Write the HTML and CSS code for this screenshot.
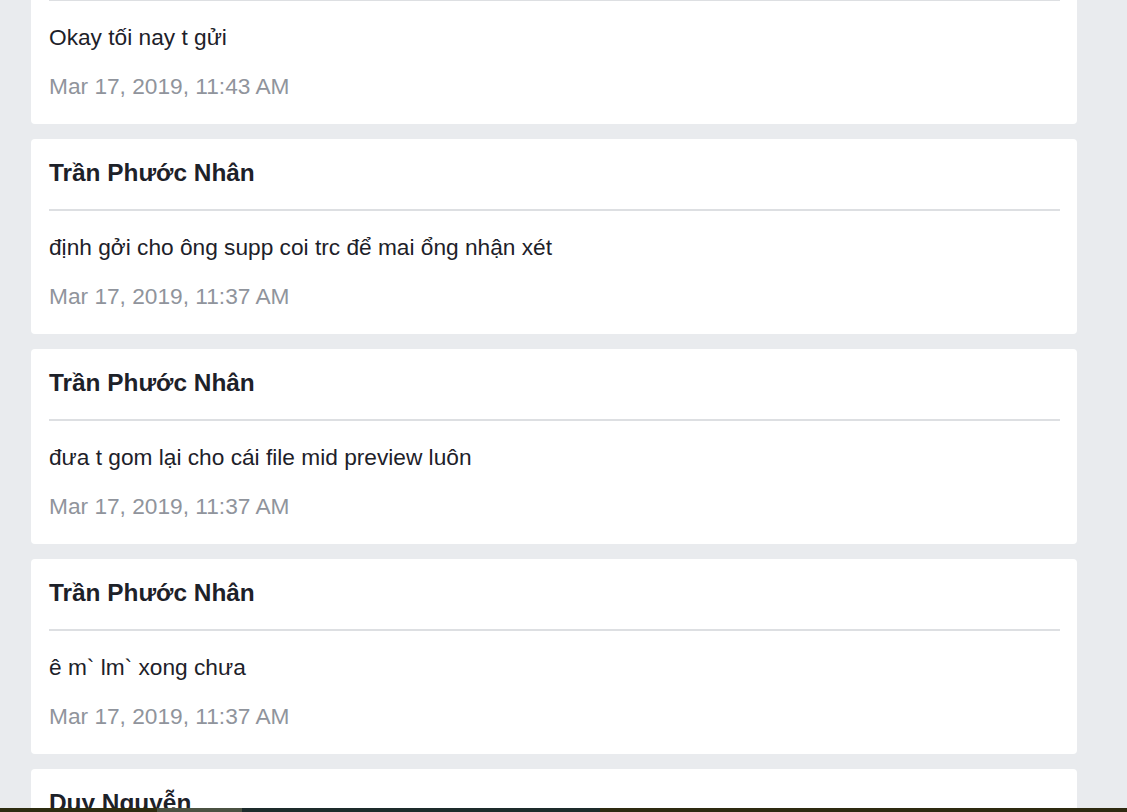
FILE: index.html
```html
<!DOCTYPE html>
<html lang="vi">
<head>
<meta charset="utf-8">
<title>Messages</title>
<link rel="stylesheet" href="styles.css">
</head>
<body>
<main class="feed">
  <article class="card">
    <header class="card-head"><h2 class="author">Trần Phước Nhân</h2></header>
    <div class="card-body">
      <p class="message">Okay tối nay t gửi</p>
      <p class="time">Mar 17, 2019, 11:43 AM</p>
    </div>
  </article>
  <article class="card">
    <header class="card-head"><h2 class="author">Trần Phước Nhân</h2></header>
    <div class="card-body">
      <p class="message">định gởi cho ông supp coi trc để mai ổng nhận xét</p>
      <p class="time">Mar 17, 2019, 11:37 AM</p>
    </div>
  </article>
  <article class="card">
    <header class="card-head"><h2 class="author">Trần Phước Nhân</h2></header>
    <div class="card-body">
      <p class="message">đưa t gom lại cho cái file mid preview luôn</p>
      <p class="time">Mar 17, 2019, 11:37 AM</p>
    </div>
  </article>
  <article class="card">
    <header class="card-head"><h2 class="author">Trần Phước Nhân</h2></header>
    <div class="card-body">
      <p class="message">ê m` lm` xong chưa</p>
      <p class="time">Mar 17, 2019, 11:37 AM</p>
    </div>
  </article>
  <article class="card">
    <header class="card-head"><h2 class="author">Duy Nguyễn</h2></header>
    <div class="card-body">
      <p class="message">&nbsp;</p>
      <p class="time">&nbsp;</p>
    </div>
  </article>
</main>
<div class="taskbar"></div>
</body>
</html>
```

FILE: styles.css
```css
html {
  overflow: hidden;
  height: 100%;
}

body {
  margin: 0;
  background: #e9ebee;
  font-family: "Liberation Sans", Arial, sans-serif;
  color: #1d2129;
}

.feed {
  margin: -71px 0 0 31px;
  width: 1046px;
  display: flex;
  flex-direction: column;
  gap: 15px;
}

.card {
  background: #ffffff;
  border-radius: 4px;
  padding: 0 17px 24px 18px;
}

.card-head {
  padding: 19px 0 21px;
  border-bottom: 2px solid #dddfe2;
}

.author {
  margin: 0;
  font-size: 24.4px;
  line-height: 30px;
  font-weight: 700;
  color: #1d2129;
}

.card-body {
  padding-top: 22px;
  display: flex;
  flex-direction: column;
  gap: 21px;
}

.message {
  margin: 0;
  font-size: 22.7px;
  line-height: 28px;
  color: #1d2129;
}

.time {
  margin: 0;
  font-size: 22.7px;
  line-height: 28px;
  color: #90949c;
}

.taskbar {
  position: fixed;
  left: 0;
  right: 0;
  bottom: 0;
  height: 4px;
  background: linear-gradient(to right,
    #2e2c10 0, #2e2c10 157px,
    #4b5242 157px, #4b5242 242px,
    #1d2b2b 242px, #1d2b2b 600px,
    #2e2a10 600px, #2e2a10 100%);
}
```
